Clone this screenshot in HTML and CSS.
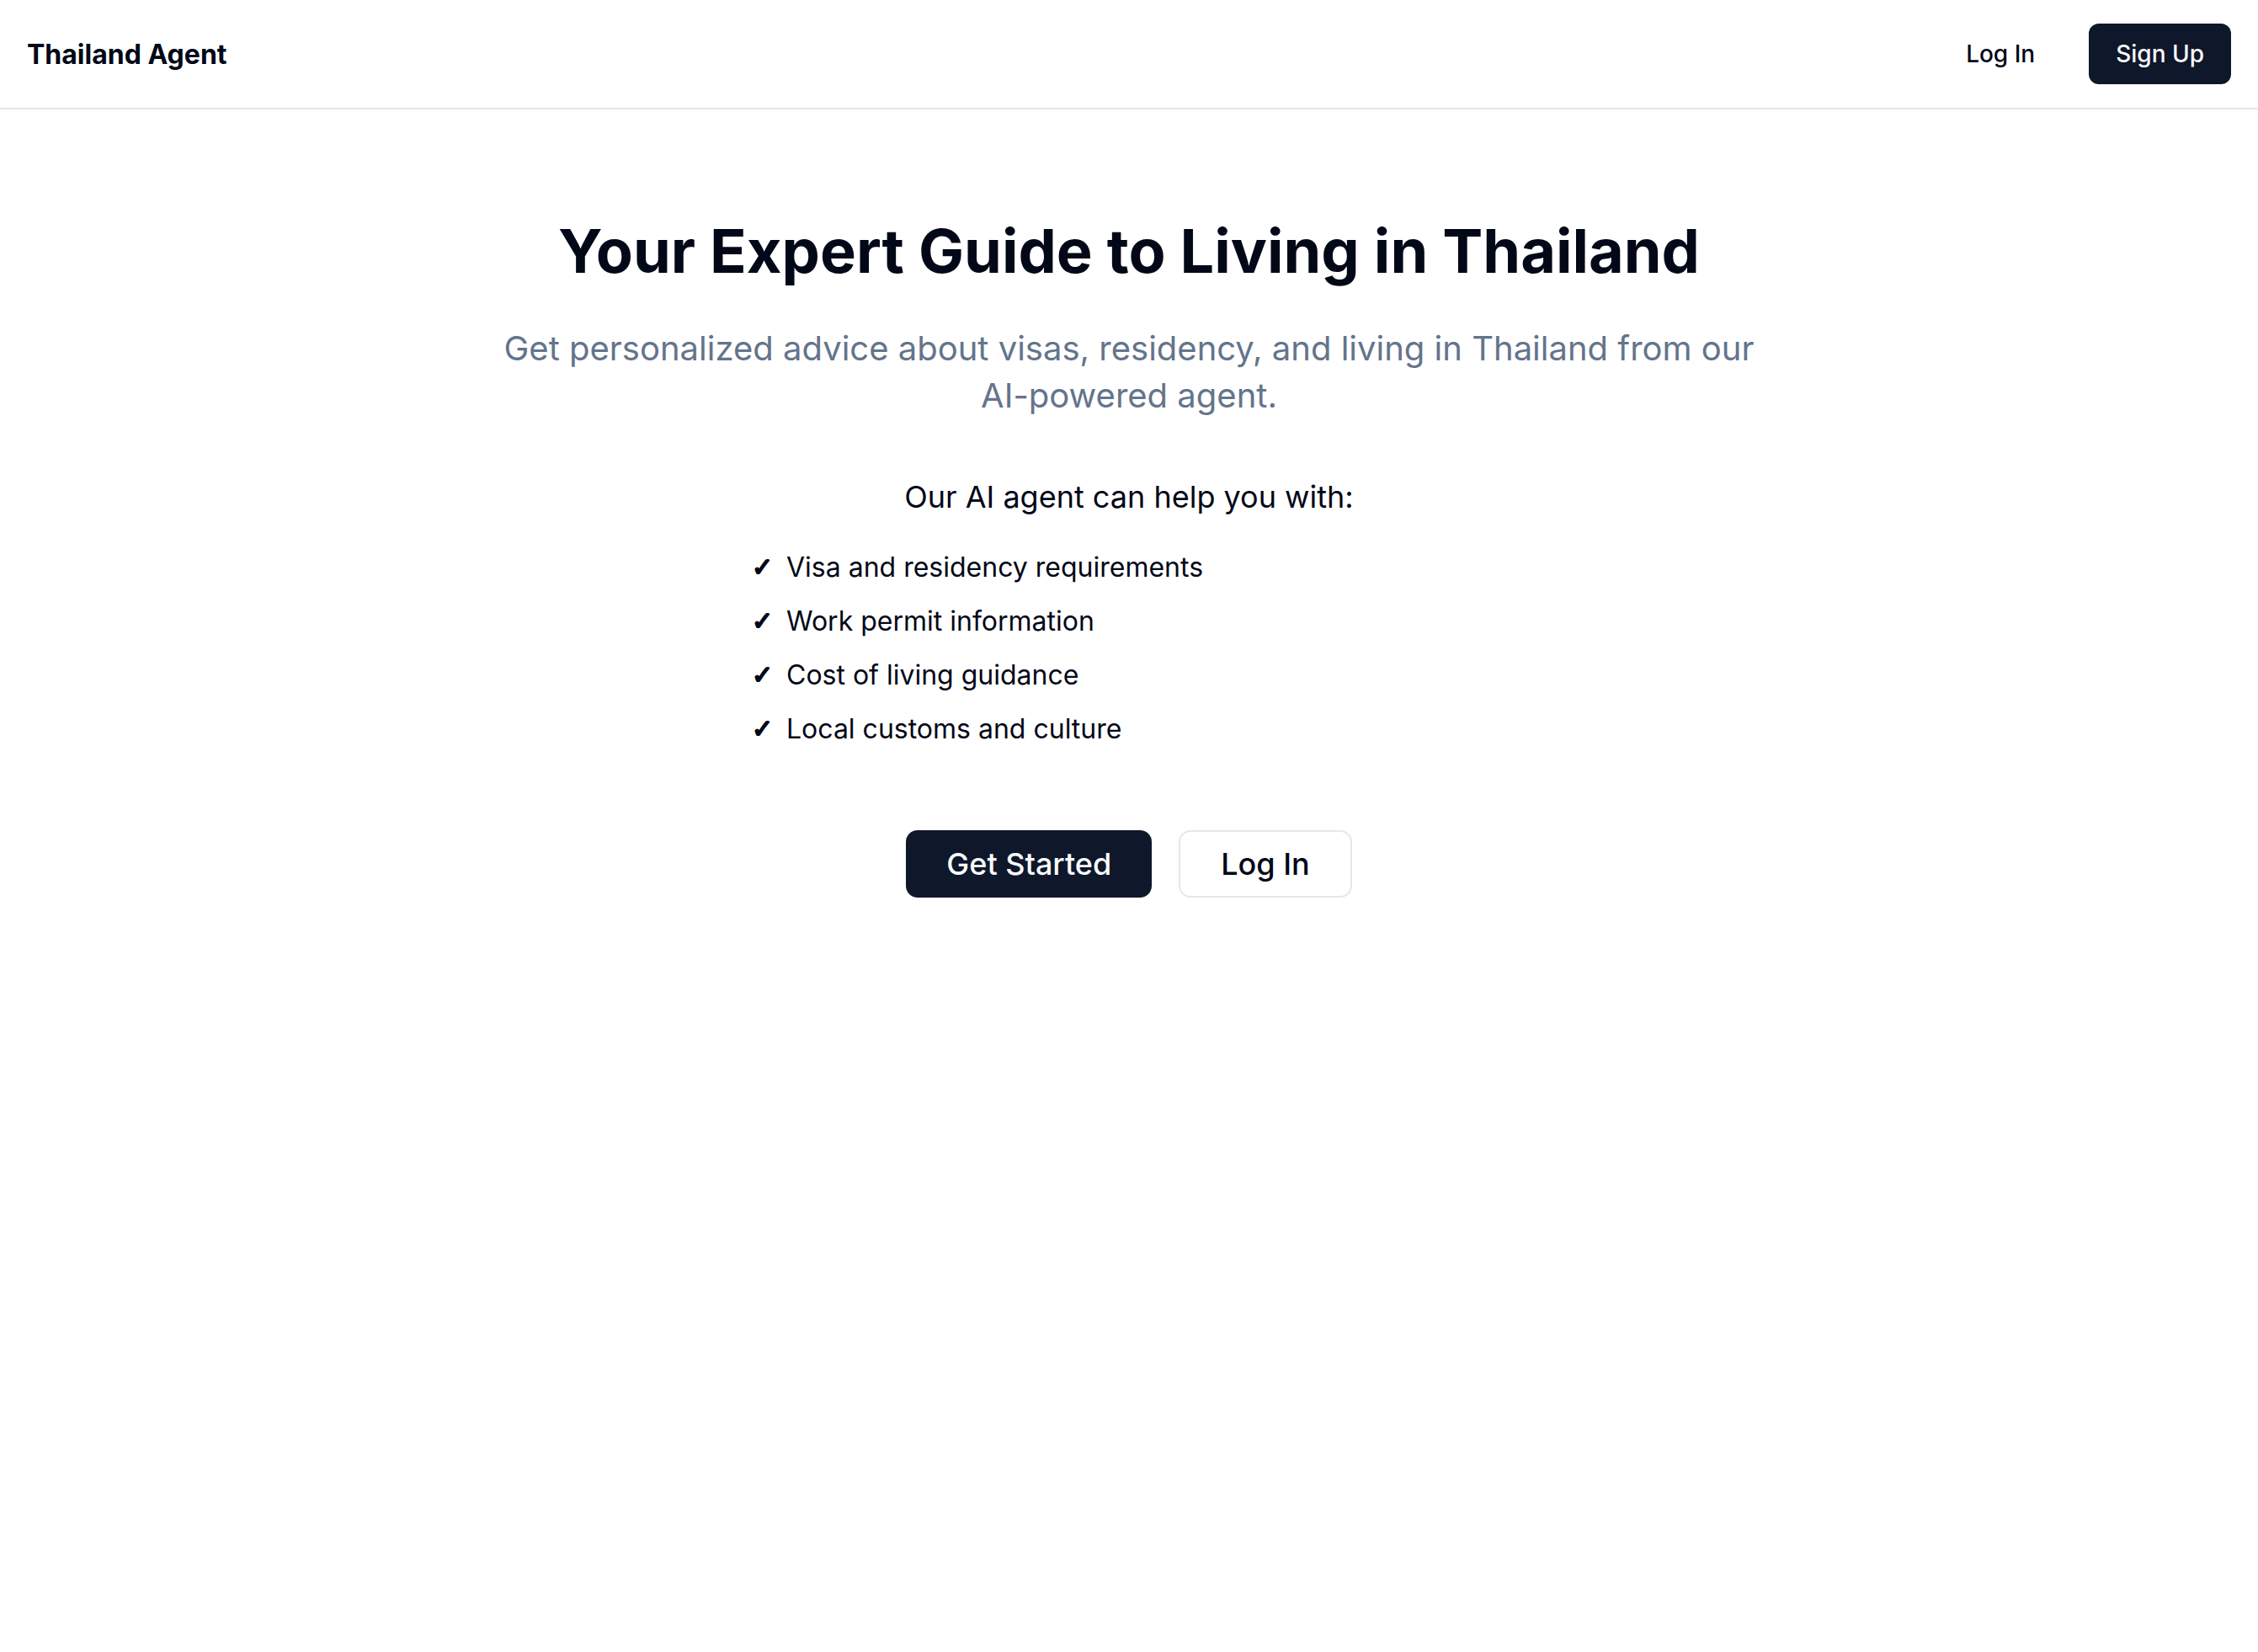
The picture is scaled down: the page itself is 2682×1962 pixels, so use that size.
FILE: index.html
```html
<!DOCTYPE html>
<html lang="en">
<head>
<meta charset="utf-8">
<title>Thailand Agent</title>
<link rel="stylesheet" href="styles.css">
</head>
<body>
<header class="site-header">
  <div class="brand">Thailand Agent</div>
  <nav class="nav">
    <a class="btn btn-ghost" href="#">Log In</a>
    <a class="btn btn-primary btn-sm" href="#">Sign Up</a>
  </nav>
</header>
<main class="hero">
  <h1 class="hero-title">Your Expert Guide to Living in Thailand</h1>
  <p class="hero-sub">Get personalized advice about visas, residency, and living in Thailand from our AI-powered agent.</p>
  <section class="features">
    <h2 class="features-title">Our AI agent can help you with:</h2>
    <ul class="feature-list">
      <li><span class="check">✓</span>Visa and residency requirements</li>
      <li><span class="check">✓</span>Work permit information</li>
      <li><span class="check">✓</span>Cost of living guidance</li>
      <li><span class="check">✓</span>Local customs and culture</li>
    </ul>
  </section>
  <div class="actions">
    <a class="btn btn-primary btn-lg" href="#">Get Started</a>
    <a class="btn btn-outline btn-lg" href="#">Log In</a>
  </div>
</main>
</body>
</html>
```
FILE: styles.css
```css
* { box-sizing: border-box; }
html, body { margin: 0; padding: 0; background: #ffffff; }
body {
  font-family: Inter, "Noto Sans", "Liberation Sans", sans-serif;
  color: #020817;
}
a { text-decoration: none; color: inherit; }

.site-header {
  height: 130px;
  display: flex;
  align-items: center;
  justify-content: space-between;
  padding: 0 32px;
  border-bottom: 2px solid #e2e8f0;
}
.brand {
  font-size: 32px;
  font-weight: 700;
}
.nav {
  display: flex;
  align-items: center;
  gap: 0;
}
.btn {
  display: inline-flex;
  align-items: center;
  justify-content: center;
  font-weight: 500;
  border-radius: 12px;
  white-space: nowrap;
}
.btn-ghost {
  font-size: 28px;
  height: 72px;
  padding: 0 32px;
  margin-right: 32px;
  color: #020817;
}
.btn-primary {
  background: #0f172a;
  color: #f8fafc;
}
.btn-sm {
  font-size: 28px;
  height: 72px;
  padding: 0 32px;
}
.btn-lg {
  font-size: 36px;
  height: 80px;
  padding: 0 48px;
  border-radius: 14px;
}
.btn-outline {
  background: #ffffff;
  border: 2px solid #e2e8f0;
  color: #020817;
}

.hero {
  display: flex;
  flex-direction: column;
  align-items: center;
  padding: 128px 32px 128px;
  text-align: center;
}
.hero-title {
  margin: 0 0 48px;
  font-size: 72px;
  line-height: 80px;
  font-weight: 700;
}
.hero-sub {
  margin: 0 0 64px;
  max-width: 1536px;
  font-size: 40px;
  line-height: 56px;
  color: #64748b;
}
.features {
  width: 896px;
  margin-bottom: 96px;
}
.features-title {
  margin: 0 0 32px;
  font-size: 36px;
  line-height: 56px;
  font-weight: 400;
}
.feature-list {
  list-style: none;
  margin: 0;
  padding: 0;
  text-align: left;
  display: flex;
  flex-direction: column;
  gap: 16px;
}
.feature-list li {
  font-size: 32px;
  line-height: 48px;
  display: flex;
  align-items: center;
}
.check {
  display: inline-block;
  width: 41px;
  font-family: "DejaVu Sans", sans-serif;
  font-size: 30px;
  -webkit-text-stroke: 2px currentColor;
}
.actions {
  display: flex;
  gap: 32px;
}
```
